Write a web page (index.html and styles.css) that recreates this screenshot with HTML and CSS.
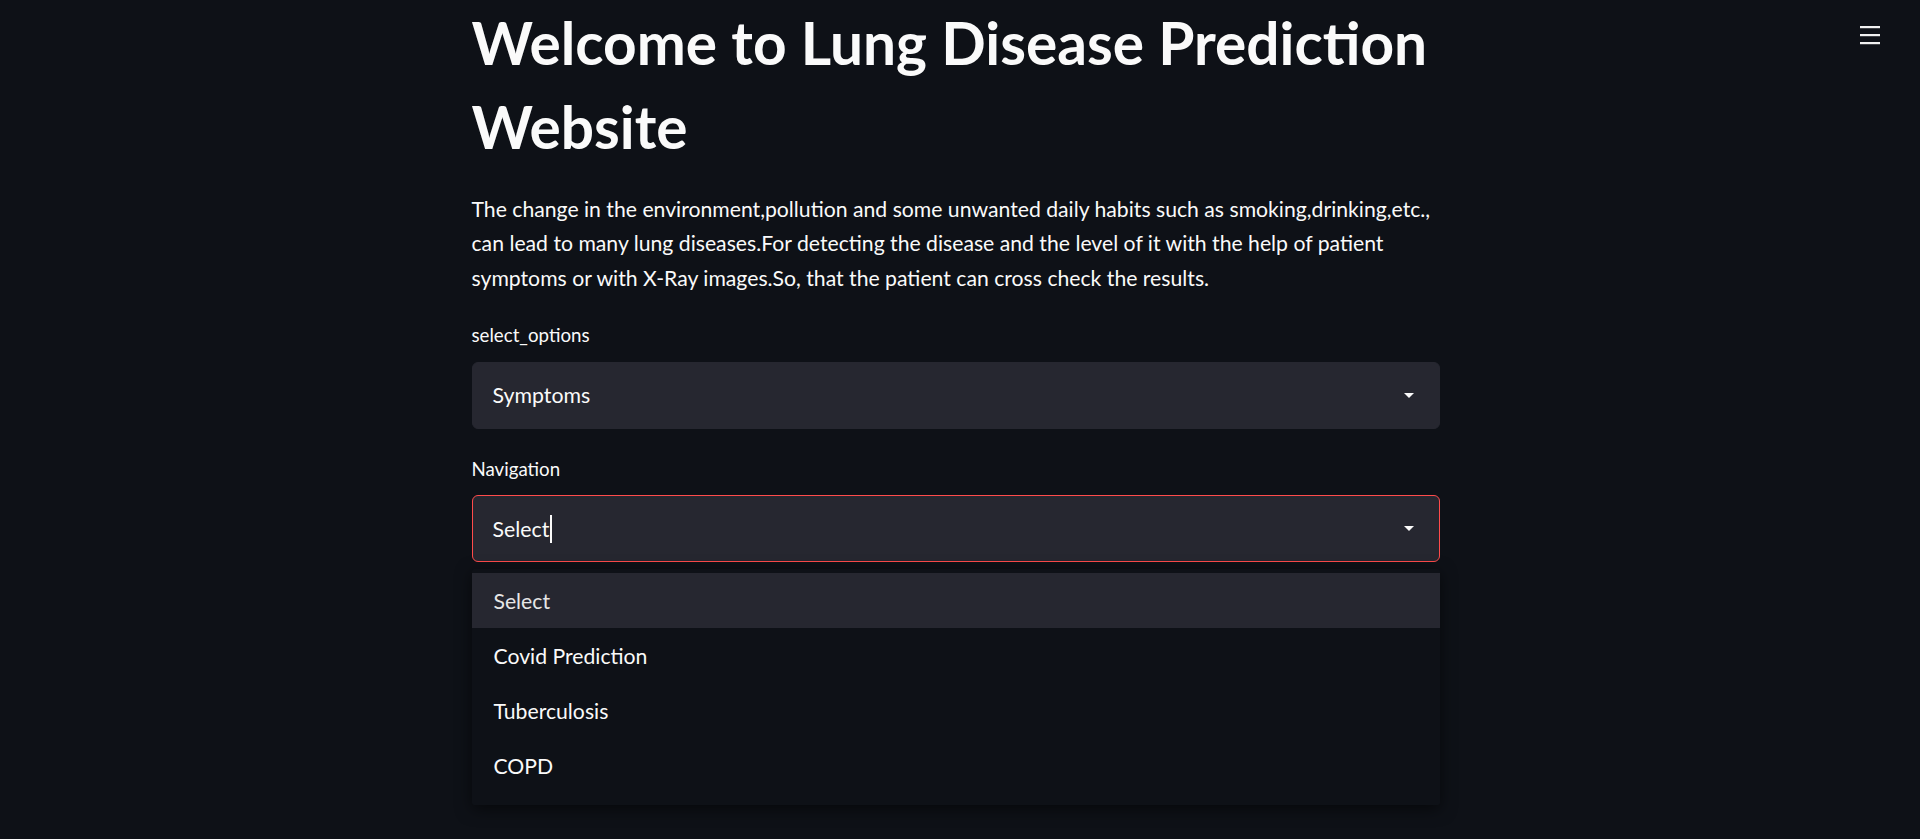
FILE: index.html
```html
<!DOCTYPE html>
<html lang="en">
<head>
<meta charset="utf-8">
<title>Lung Disease Prediction</title>
<link rel="stylesheet" href="styles.css">
</head>
<body>
<header class="toolbar">
  <button class="menu-btn" aria-label="Main menu">
    <span class="bar"></span><span class="bar"></span><span class="bar"></span>
  </button>
</header>
<div class="page">
  <main class="block">
    <h1 class="title">Welcome to Lung Disease Prediction Website</h1>
    <p class="intro">The change in the environment,pollution and some unwanted daily habits such as smoking,drinking,etc., can lead to many lung diseases.For detecting the disease and the level of it with the help of patient symptoms or with X-Ray images.So, that the patient can cross check the results.</p>

    <div class="field">
      <label class="field-label">select_options</label>
      <div class="select">
        <span class="select-value">Symptoms</span>
        <svg class="caret" width="10" height="5" viewBox="0 0 10 5"><path d="M0 0h10L5 5z" fill="#fafafa"/></svg>
      </div>
    </div>

    <div class="field field-nav">
      <label class="field-label">Navigation</label>
      <div class="select select-focus">
        <span class="select-value">Select<span class="cursor"></span></span>
        <svg class="caret" width="10" height="5" viewBox="0 0 10 5"><path d="M0 0h10L5 5z" fill="#fafafa"/></svg>
      </div>
      <ul class="menu">
        <li class="option option-active">Select</li>
        <li class="option">Covid Prediction</li>
        <li class="option">Tuberculosis</li>
        <li class="option">COPD</li>
      </ul>
    </div>
  </main>
</div>
</body>
</html>
```

FILE: styles.css
```css
* { box-sizing: border-box; }

html, body {
  margin: 0;
  padding: 0;
  height: 100%;
  background: #0e1117;
  color: #fafafa;
  font-family: Lato, "Open Sans", sans-serif;
  overflow: hidden;
}

.toolbar {
  position: fixed;
  top: 0;
  right: 0;
  left: 0;
  height: 60px;
  display: flex;
  justify-content: flex-end;
  align-items: flex-start;
  padding: 22px 36px 0 0;
  z-index: 5;
  pointer-events: none;
}

.menu-btn {
  width: 28px;
  height: 26px;
  padding: 4px;
  border: 0;
  background: transparent;
  display: flex;
  flex-direction: column;
  justify-content: space-between;
  pointer-events: auto;
}

.bar {
  display: block;
  width: 20px;
  height: 2px;
  background: #f0f0f0;
  box-shadow: 0 0.5px 0 rgba(180,180,180,0.6);
}

.page {
  display: flex;
  justify-content: center;
}

.block {
  width: 977px;
  padding-right: 9px;
}

.title {
  margin: 0;
  font-size: 58.6px;
  font-weight: 700;
  line-height: 84px;
}

.intro {
  margin: 24px 0 0;
  font-size: 21.2px;
  line-height: 34.3px;
}

.field {
  display: flex;
  flex-direction: column;
  gap: 12px;
  margin-top: 26px;
}

.field-nav {
  position: relative;
  margin-top: 26px;
}

.field-label {
  font-size: 18.7px;
  line-height: 28.8px;
}

.select {
  height: 67px;
  display: flex;
  align-items: center;
  justify-content: space-between;
  padding: 0 25px 0 20px;
  background: #262730;
  border: 1px solid #262730;
  border-radius: 6px;
  font-size: 21.3px;
}

.select-focus {
  border-color: #ff4b4b;
}

.select-value {
  display: flex;
  align-items: center;
}

.cursor {
  display: inline-block;
  width: 2px;
  height: 28px;
  margin-left: 1px;
  background: #fafafa;
}

.caret {
  display: block;
}

.menu {
  position: absolute;
  top: 100%;
  left: 0;
  right: 0;
  margin: 7px 0 0;
  padding: 4px 0 12px;
  list-style: none;
  background: #0e1117;
  box-shadow: 0 4px 16px rgba(0, 0, 0, 0.55);
  border-radius: 2px;
}

.option {
  height: 55px;
  display: flex;
  align-items: center;
  padding: 0 22px;
  font-size: 21.2px;
}

.option-active {
  background: #262730;
  color: #e6e6e6;
}
```
